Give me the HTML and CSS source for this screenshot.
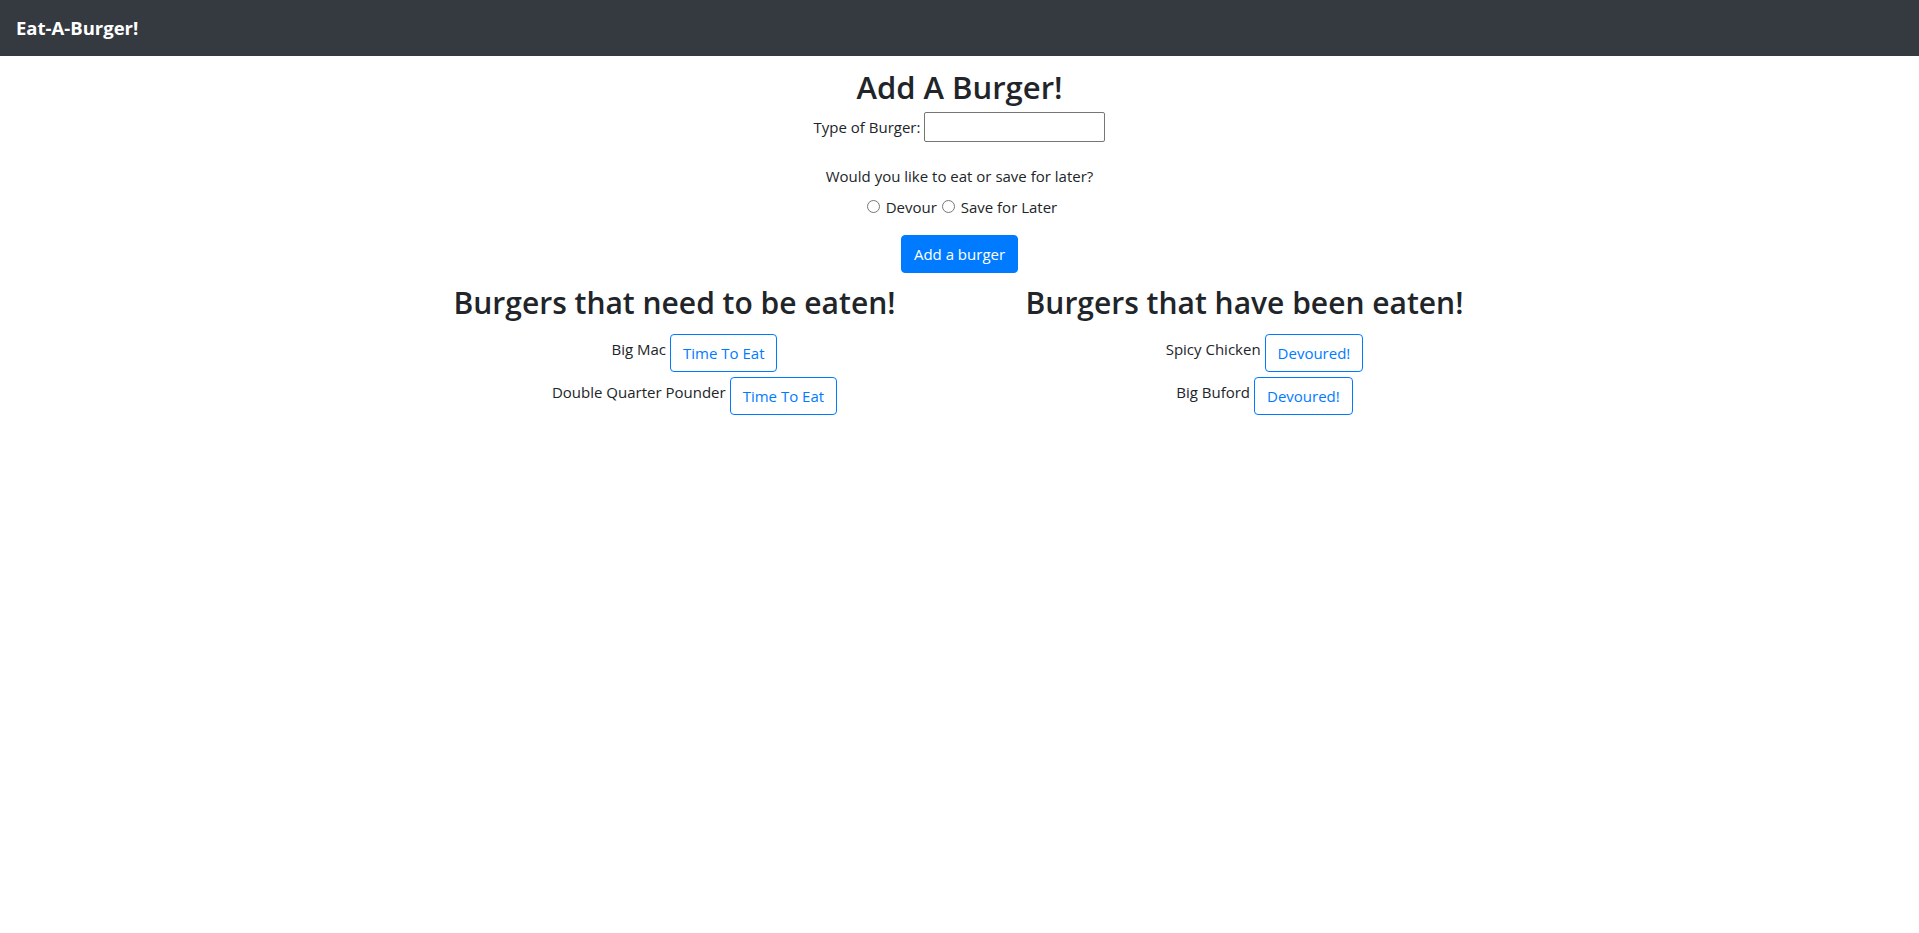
FILE: index.html
```html
<!DOCTYPE html>
<html lang="en">
<head>
<meta charset="utf-8">
<title>Eat-A-Burger!</title>
<link rel="stylesheet" href="styles.css">
</head>
<body>
<nav class="navbar">
  <a class="brand" href="#">Eat-A-Burger!</a>
</nav>
<main class="container">
  <section class="add">
    <h1 class="title">Add A Burger!</h1>
    <div class="field">
      <label class="field-label" for="burger">Type of Burger:</label>
      <input class="field-input" id="burger" type="text">
    </div>
    <p class="question">Would you like to eat or save for later?</p>
    <div class="choices">
      <input class="radio" type="radio" name="devoured" id="devour"> <label for="devour">Devour</label><input class="radio" type="radio" name="devoured" id="later"> <label for="later">Save for Later</label>
    </div>
    <button class="btn btn-primary" type="button">Add a burger</button>
  </section>
  <section class="lists">
    <div class="col">
      <h2 class="col-title">Burgers that need to be eaten!</h2>
      <ul class="burger-list">
        <li class="burger"><span class="burger-name">Big Mac</span><button class="btn btn-outline" type="button">Time To Eat</button></li>
        <li class="burger"><span class="burger-name">Double Quarter Pounder</span><button class="btn btn-outline" type="button">Time To Eat</button></li>
      </ul>
    </div>
    <div class="col">
      <h2 class="col-title">Burgers that have been eaten!</h2>
      <ul class="burger-list">
        <li class="burger"><span class="burger-name">Spicy Chicken</span><button class="btn btn-outline" type="button">Devoured!</button></li>
        <li class="burger"><span class="burger-name">Big Buford</span><button class="btn btn-outline" type="button">Devoured!</button></li>
      </ul>
    </div>
  </section>
</main>
</body>
</html>
```

FILE: styles.css
```css
* { box-sizing: border-box; }

body {
  margin: 0;
  font-family: "Open Sans", "Noto Sans", sans-serif;
  font-size: 15px;
  line-height: 24px;
  color: #212529;
  background: #fff;
}

.navbar {
  height: 56px;
  background: #343a40;
  display: flex;
  align-items: center;
  padding: 0 16px;
}

.brand {
  color: #fff;
  font-weight: 700;
  font-size: 18.5px;
  text-decoration: none;
  line-height: 30px;
}

.container {
  width: 1140px;
  margin: 0 auto;
  padding-top: 12px;
  text-align: center;
}

.title {
  margin: 0;
  font-size: 31px;
  line-height: 38px;
  font-weight: 600;
}

.field {
  margin-top: 6px;
  display: flex;
  justify-content: center;
  align-items: center;
  gap: 4px;
}

.field-input {
  width: 181px;
  height: 30px;
  border: 1px solid #767676;
  border-radius: 2px;
  font: inherit;
  padding: 1px 2px;
}

.question {
  margin: 22px 0 0;
}

.choices {
  margin-top: 7px;
}

.radio {
  margin: 3px 2px 0 5px;
}

.btn {
  display: inline-block;
  font: inherit;
  line-height: 24px;
  padding: 6px 12px;
  border: 1px solid transparent;
  border-radius: 4px;
  background: transparent;
  cursor: pointer;
}

.btn-primary {
  margin-top: 16px;
  background: #007bff;
  border-color: #007bff;
  color: #fff;
}

.btn-outline {
  border-color: #007bff;
  color: #007bff;
}

.lists {
  margin-top: 11px;
  display: grid;
  grid-template-columns: 1fr 1fr;
}

.col-title {
  margin: 0;
  font-size: 30px;
  line-height: 38px;
  font-weight: 600;
}

.burger-list {
  list-style: none;
  margin: 12px 0 0;
  padding: 0 0 0 40px;
}

.burger {
  display: flex;
  justify-content: center;
  align-items: flex-start;
  gap: 4px;
  margin-bottom: 5px;
}

.burger-name {
  margin-top: 3px;
}
```
